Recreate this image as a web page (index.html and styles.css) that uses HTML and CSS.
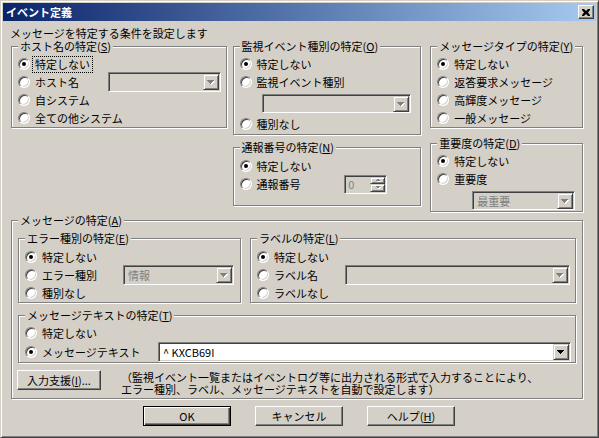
FILE: index.html
```html
<!DOCTYPE html>
<html lang="ja">
<head>
    <meta charset="UTF-8">
    <title>イベント定義</title>
    <link rel="stylesheet" href="styles.css">
</head>
<body>
<div class="window">
    <div class="titlebar">
        <span class="title">イベント定義</span>
        <span class="close">
            <svg width="8" height="7" viewBox="0 0 8 7"><path d="M0 0h2l2 2 2-2h2v1l-2 2.5 2 2.5v1H6L4 5 2 7H0V6l2-2.5L0 1z"/></svg>
        </span>
    </div>

    <div class="client">
        <div class="intro">メッセージを特定する条件を設定します</div>

        <div class="top">
            <div class="col col-host">
                <fieldset class="grp">
                    <legend>ホスト名の特定(<u>S</u>)</legend>
                    <div class="body pt2">
                        <div class="opt"><span class="radio on"></span><span class="focus">特定しない</span></div>
                        <div class="opt"><span class="radio"></span>ホスト名
                            <span class="combo off host-combo"><span class="combo-text"></span><span class="drop"><svg width="8" height="5"><path class="hl" d="M1 1h7L4.5 5z"/><path d="M0 0h7L3.5 4z"/></svg></span></span>
                        </div>
                        <div class="opt"><span class="radio"></span>自システム</div>
                        <div class="opt"><span class="radio"></span>全ての他システム</div>
                    </div>
                </fieldset>
            </div>

            <div class="col col-event">
                <fieldset class="grp">
                    <legend>監視イベント種別の特定(<u>O</u>)</legend>
                    <div class="body pt2 pb1">
                        <div class="opt"><span class="radio on"></span>特定しない</div>
                        <div class="opt"><span class="radio"></span>監視イベント種別</div>
                        <div class="combo-row">
                            <span class="combo off event-combo"><span class="combo-text"></span><span class="drop"><svg width="8" height="5"><path class="hl" d="M1 1h7L4.5 5z"/><path d="M0 0h7L3.5 4z"/></svg></span></span>
                        </div>
                        <div class="opt"><span class="radio"></span>種別なし</div>
                    </div>
                </fieldset>

                <fieldset class="grp notice">
                    <legend>通報番号の特定(<u>N</u>)</legend>
                    <div class="body pt3 pb12">
                        <div class="opt"><span class="radio on"></span>特定しない</div>
                        <div class="opt"><span class="radio"></span>通報番号
                            <span class="spin">
                                <span class="spin-text">0</span>
                                <span class="spin-btns">
                                    <span class="spin-btn"><svg width="6" height="4"><path class="hl" d="M1 4h5L3.5 1.5z"/><path d="M0 3h5L2.5 0.5z"/></svg></span>
                                    <span class="spin-btn"><svg width="6" height="4"><path class="hl" d="M1 1h5L3.5 3.5z"/><path d="M0 0h5L2.5 2.5z"/></svg></span>
                                </span>
                            </span>
                        </div>
                    </div>
                </fieldset>
            </div>

            <div class="col col-type">
                <fieldset class="grp">
                    <legend>メッセージタイプの特定(<u>Y</u>)</legend>
                    <div class="body pt2">
                        <div class="opt"><span class="radio on"></span>特定しない</div>
                        <div class="opt"><span class="radio"></span>返答要求メッセージ</div>
                        <div class="opt"><span class="radio"></span>高輝度メッセージ</div>
                        <div class="opt"><span class="radio"></span>一般メッセージ</div>
                    </div>
                </fieldset>

                <fieldset class="grp severity">
                    <legend>重要度の特定(<u>D</u>)</legend>
                    <div class="body pt2 pb1">
                        <div class="opt"><span class="radio on"></span>特定しない</div>
                        <div class="opt"><span class="radio"></span>重要度</div>
                        <div class="combo-row sev-row">
                            <span class="combo off sev-combo"><span class="combo-text">最重要</span><span class="drop"><svg width="8" height="5"><path class="hl" d="M1 1h7L4.5 5z"/><path d="M0 0h7L3.5 4z"/></svg></span></span>
                        </div>
                    </div>
                </fieldset>
            </div>
        </div>

        <fieldset class="grp big">
            <legend>メッセージの特定(<u>A</u>)</legend>
            <div class="body pt5">
                <div class="sub-row">
                    <fieldset class="grp err">
                        <legend>エラー種別の特定(<u>E</u>)</legend>
                        <div class="body pt3">
                            <div class="opt"><span class="radio on"></span>特定しない</div>
                            <div class="opt"><span class="radio"></span>エラー種別
                                <span class="combo off err-combo"><span class="combo-text">情報</span><span class="drop"><svg width="8" height="5"><path class="hl" d="M1 1h7L4.5 5z"/><path d="M0 0h7L3.5 4z"/></svg></span></span>
                            </div>
                            <div class="opt"><span class="radio"></span>種別なし</div>
                        </div>
                    </fieldset>

                    <fieldset class="grp label">
                        <legend>ラベルの特定(<u>L</u>)</legend>
                        <div class="body pt3">
                            <div class="opt"><span class="radio on"></span>特定しない</div>
                            <div class="opt"><span class="radio"></span>ラベル名
                                <span class="combo off label-combo"><span class="combo-text"></span><span class="drop"><svg width="8" height="5"><path class="hl" d="M1 1h7L4.5 5z"/><path d="M0 0h7L3.5 4z"/></svg></span></span>
                            </div>
                            <div class="opt"><span class="radio"></span>ラベルなし</div>
                        </div>
                    </fieldset>
                </div>

                <fieldset class="grp msgtext">
                    <legend>メッセージテキストの特定(<u>T</u>)</legend>
                    <div class="body pt2">
                        <div class="opt"><span class="radio"></span>特定しない</div>
                        <div class="opt opt-tall"><span class="radio on"></span>メッセージテキスト
                            <span class="combo text-combo"><span class="combo-text">^ KXCB69I</span><span class="drop"><svg width="8" height="5"><path d="M0 0h7L3.5 4z"/></svg></span></span>
                        </div>
                    </div>
                </fieldset>

                <div class="assist">
                    <span class="btn assist-btn">入力支援(<u>I</u>)...</span>
                    <div class="desc">
                        （監視イベント一覧またはイベントログ等に出力される形式で入力することにより、<br>
                        エラー種別、ラベル、メッセージテキストを自動で設定します）
                    </div>
                </div>
            </div>
        </fieldset>

        <div class="buttons">
            <span class="btn default">OK</span>
            <span class="btn">キャンセル</span>
            <span class="btn">ヘルプ(<u>H</u>)</span>
        </div>
    </div>
</div>
</body>
</html>
```

FILE: styles.css
```css
:root {
    --face: #d4d0c8;
    --shadow: #808080;
    --dark: #404040;
    --light: #ffffff;
}

* {
    box-sizing: border-box;
}

body {
    margin: 0;
    background: var(--face);
    color: #000;
    font-family: "Noto Sans CJK JP", "Liberation Sans", sans-serif;
    font-size: 11px;
    line-height: 13px;
}

u {
    text-decoration-thickness: 1px;
    text-underline-offset: 1px;
}

/* window frame */
.window {
    width: 599px;
    height: 438px;
    background: var(--face);
    border: 1px solid;
    border-color: var(--face) var(--dark) var(--dark) var(--face);
    box-shadow: inset 1px 1px 0 var(--light), inset -1px -1px 0 var(--shadow);
    padding: 2px;
}

.titlebar {
    height: 18px;
    display: flex;
    align-items: center;
    justify-content: space-between;
    padding: 0 2px 0 3px;
    background: linear-gradient(90deg, #0a246a 0%, #a6caf0 100%);
}

.title {
    color: #fff;
    font-weight: bold;
    font-size: 11px;
}

.close {
    width: 16px;
    height: 14px;
    display: flex;
    align-items: center;
    justify-content: center;
    background: var(--face);
    border: 1px solid;
    border-color: var(--light) var(--dark) var(--dark) var(--light);
    box-shadow: inset -1px -1px 0 var(--shadow);
}

.client {
    padding: 6px 13px 0 8px;
}

.intro {
    height: 12px;
    line-height: 12px;
    margin: 0 0 1px -1px;
}

/* group boxes */
.grp {
    margin: 0;
    padding: 0 0 0 6px;
    min-width: 0;
    border: 1px solid var(--shadow);
    box-shadow: 1px 1px 0 var(--light), inset 1px 1px 0 var(--light);
}

.grp legend {
    padding: 0 2px;
    line-height: 13px;
    background: var(--face);
    white-space: nowrap;
}

.pt2 { padding-top: 2px; }
.pt3 { padding-top: 3px; }
.pt5 { padding-top: 5px; }
.pb1 { padding-bottom: 1px; }
.pb12 { padding-bottom: 12px; }

.top {
    display: flex;
    align-items: flex-start;
    height: 174px;
}

.col {
    display: flex;
    flex-direction: column;
}

.col-host { width: 216px; }
.col-event { width: 189px; margin-left: 6px; }
.col-type { width: 153px; margin-left: 9px; }

.notice { margin-top: 6px; }
.severity { margin-top: 9px; }

/* radio rows */
.opt {
    height: 18px;
    display: flex;
    align-items: center;
    white-space: nowrap;
}

.opt-tall {
    height: 20px;
}

.radio {
    position: relative;
    flex: none;
    width: 12px;
    height: 12px;
    margin-right: 5px;
    border-radius: 50%;
    background: #fff;
    border: 1px solid;
    border-color: var(--shadow) var(--light) var(--light) var(--shadow);
    box-shadow: inset 1px 1px 0 var(--dark), inset -1px -1px 0 var(--face);
}

.radio.on::after {
    content: "";
    position: absolute;
    left: 3px;
    top: 3px;
    width: 4px;
    height: 4px;
    border-radius: 50%;
    background: #000;
}

.focus {
    outline: 1px dotted #000;
    padding: 1px 2px;
    margin-left: -2px;
}

/* combo boxes */
.combo {
    display: flex;
    height: 20px;
    padding: 1px;
    background: #fff;
    border: 1px solid;
    border-color: var(--shadow) var(--light) var(--light) var(--shadow);
    box-shadow: inset 1px 1px 0 var(--dark), inset -1px -1px 0 var(--face);
}

.combo-text {
    flex: 1;
    padding: 1px 0 0 3px;
    line-height: 14px;
}

.combo.off {
    background: var(--face);
    color: var(--shadow);
}

.drop,
.spin-btn {
    display: flex;
    align-items: center;
    justify-content: center;
    background: var(--face);
    border: 1px solid;
    border-color: var(--face) var(--dark) var(--dark) var(--face);
    box-shadow: inset 1px 1px 0 var(--light), inset -1px -1px 0 var(--shadow);
}

.drop {
    width: 16px;
    height: 16px;
}

.drop svg,
.spin-btn svg {
    display: block;
    shape-rendering: crispEdges;
}

.combo.off path,
.spin path {
    fill: var(--shadow);
}

.combo.off path.hl,
.spin path.hl {
    fill: var(--light);
}

.combo-row {
    height: 24px;
    padding: 3px 0 0 22px;
}

.combo-row .combo {
    height: 19px;
}

.host-combo { width: 113px; margin: 0 5px 0 auto; }
.event-combo { width: 149px; }
.sev-row { padding-left: 35px; height: 22px; }
.sev-combo { width: 103px; }
.err-combo { width: 111px; margin: 0 6px 0 auto; }
.label-combo { width: 225px; margin: 0 5px 0 auto; }
.text-combo { width: 413px; margin: 0 4px 0 auto; }

/* spin box */
.spin {
    display: flex;
    width: 43px;
    height: 19px;
    margin: 0 33px 0 auto;
    padding: 1px;
    background: var(--face);
    color: var(--shadow);
    border: 1px solid;
    border-color: var(--shadow) var(--light) var(--light) var(--shadow);
    box-shadow: inset 1px 1px 0 var(--dark), inset -1px -1px 0 var(--face);
}

.spin-text {
    flex: 1;
    padding-left: 2px;
    line-height: 15px;
}

.spin-btns {
    display: flex;
    flex-direction: column;
    width: 15px;
}

.spin-btn {
    flex: 1;
}

/* message group */
.big {
    margin-top: 0;
    padding-right: 6px;
}

.sub-row {
    display: flex;
    align-items: flex-start;
}

.err { width: 223px; }
.label { width: 326px; margin-left: 9px; }

.msgtext {
    width: 558px;
    margin-top: 6px;
}

.assist {
    display: flex;
    align-items: flex-start;
    height: 20px;
    margin: 7px 0 8px -1px;
}

.desc {
    margin: 1px 0 0 20px;
    line-height: 12px;
    white-space: nowrap;
}

/* push buttons */
.btn {
    display: flex;
    align-items: center;
    justify-content: center;
    height: 20px;
    background: var(--face);
    border: 1px solid;
    border-color: var(--light) var(--dark) var(--dark) var(--light);
    box-shadow: inset -1px -1px 0 var(--shadow);
    white-space: nowrap;
}

.assist-btn {
    flex: none;
    width: 84px;
}

.buttons {
    display: flex;
    gap: 24px;
    margin-top: 7px;
    padding-left: 132px;
}

.buttons .btn {
    width: 88px;
}

.btn.default {
    border-color: #000;
    box-shadow: inset 1px 1px 0 var(--light), inset -1px -1px 0 var(--dark), inset -2px -2px 0 var(--shadow);
}
```
